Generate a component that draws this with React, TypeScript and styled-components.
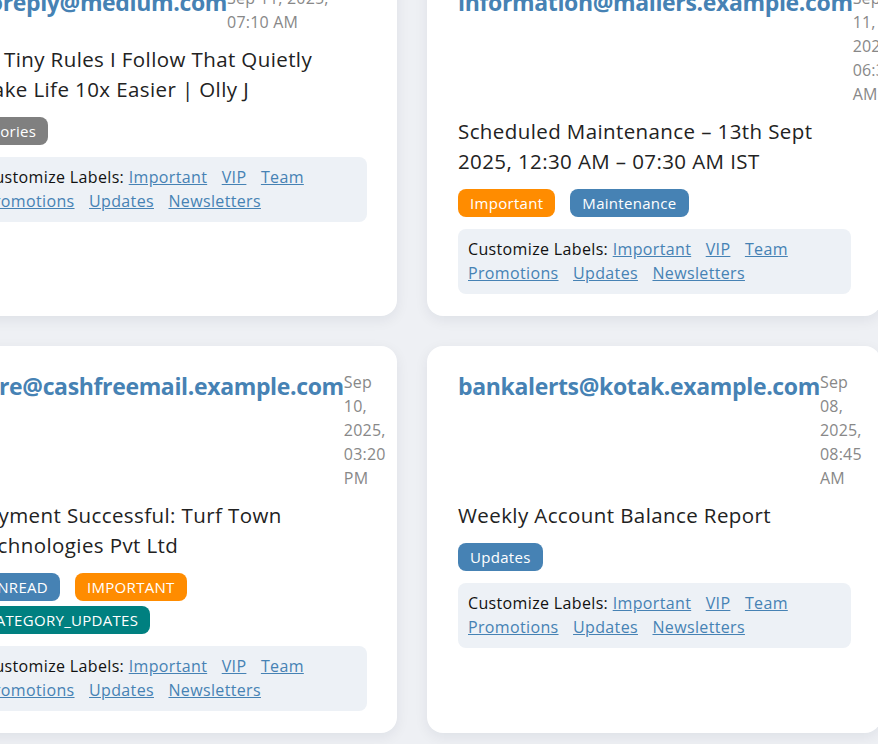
import React from "react";
import styled, { createGlobalStyle } from "styled-components";

const GlobalStyle = createGlobalStyle`
  html, body {
    margin: 0;
    padding: 0;
    background: #eef0f4;
    overflow: hidden;
  }
  body {
    font-family: "Open Sans", "Noto Sans", sans-serif;
  }
`;

const Grid = styled.div`
  display: grid;
  grid-template-columns: repeat(2, 454px);
  gap: 30px;
  margin: -38px 0 0 -57px;
  padding-bottom: 40px;
`;

const Card = styled.div`
  background: #fff;
  border-radius: 16px;
  box-shadow: 0 4px 14px rgba(20, 30, 60, 0.07);
  padding: 24px 30px 22px 31px;
  min-width: 0;
`;

const Header = styled.div`
  display: flex;
  justify-content: space-between;
  align-items: flex-start;
`;

const Sender = styled.div`
  font-size: 23px;
  line-height: 32px;
  font-weight: 700;
  color: #4682b4;
  letter-spacing: -0.35px;
`;

const DateText = styled.div`
  font-size: 16px;
  line-height: 24px;
  color: #888;
  letter-spacing: 0.2px;
`;

const Subject = styled.h3`
  margin: 10px 0 13px;
  font-size: 20.5px;
  line-height: 30px;
  font-weight: 400;
  color: #222;
  letter-spacing: 0.4px;
`;

const Badges = styled.div`
  display: flex;
  flex-wrap: wrap;
  gap: 5px 15px;
`;

const Badge = styled.span<{ $bg: string }>`
  display: inline-block;
  height: 28px;
  line-height: 28px;
  padding: 0 12px;
  border-radius: 8px;
  background: ${(p) => p.$bg};
  color: #fff;
  font-size: 15px;
  letter-spacing: 0.3px;
`;

const LabelBox = styled.div`
  margin-top: 12px;
  background: #edf1f6;
  border-radius: 8px;
  padding: 8px 10px 9px;
  font-size: 16px;
  line-height: 24px;
  color: #111;
  letter-spacing: 0.35px;
`;

const LabelLink = styled.a`
  color: #4682b4;
  text-decoration: underline;
  margin-right: 10px;
  cursor: pointer;
`;

const badgeColors: Record<string, string> = {
  Important: "#ff8c00",
  IMPORTANT: "#ff8c00",
  Maintenance: "#4682b4",
  Updates: "#4682b4",
  UNREAD: "#4682b4",
  CATEGORY_UPDATES: "#008080",
  Stories: "#808080",
};

const labelOptions = ["Important", "VIP", "Team", "Promotions", "Updates", "Newsletters"];

type Email = {
  from: string;
  date: string;
  subject: string;
  labels: string[];
};

const emails: Email[] = [
  {
    from: "noreply@medium.com",
    date: "Sep 11, 2025, 07:10 AM",
    subject: "10 Tiny Rules I Follow That Quietly Make Life 10x Easier | Olly J",
    labels: ["Stories"],
  },
  {
    from: "information@mailers.example.com",
    date: "Sep 11, 2025, 06:30 AM",
    subject: "Scheduled Maintenance – 13th Sept 2025, 12:30 AM – 07:30 AM IST",
    labels: ["Important", "Maintenance"],
  },
  {
    from: "care@cashfreemail.example.com",
    date: "Sep 10, 2025, 03:20 PM",
    subject: "Payment Successful: Turf Town Technologies Pvt Ltd",
    labels: ["UNREAD", "IMPORTANT", "CATEGORY_UPDATES"],
  },
  {
    from: "bankalerts@kotak.example.com",
    date: "Sep 08, 2025, 08:45 AM",
    subject: "Weekly Account Balance Report",
    labels: ["Updates"],
  },
];

function EmailCard({ email }: { email: Email }) {
  return (
    <Card>
      <Header>
        <Sender>{email.from}</Sender>
        <DateText>{email.date}</DateText>
      </Header>
      <Subject>{email.subject}</Subject>
      <Badges>
        {email.labels.map((l) => (
          <Badge key={l} $bg={badgeColors[l] || "#808080"}>
            {l}
          </Badge>
        ))}
      </Badges>
      <LabelBox>
        Customize Labels:{" "}
        {labelOptions.map((o) => (
          <React.Fragment key={o}>
            <LabelLink>{o}</LabelLink>{" "}
          </React.Fragment>
        ))}
      </LabelBox>
    </Card>
  );
}

export default function App() {
  return (
    <>
      <GlobalStyle />
      <Grid>
        {emails.map((e) => (
          <EmailCard key={e.from} email={e} />
        ))}
      </Grid>
    </>
  );
}
